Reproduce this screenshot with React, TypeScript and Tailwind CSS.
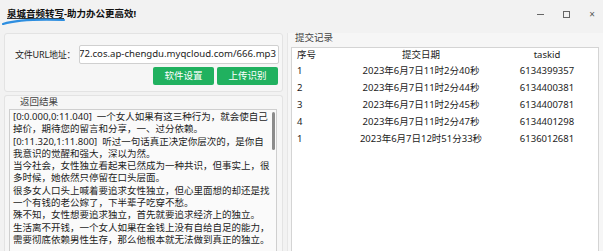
const rows = [
  { no: "1", date: "2023年6月7日11时2分40秒", id: "6134399357" },
  { no: "2", date: "2023年6月7日11时2分44秒", id: "6134400381" },
  { no: "3", date: "2023年6月7日11时2分45秒", id: "6134400781" },
  { no: "4", date: "2023年6月7日11时2分47秒", id: "6134401298" },
  { no: "1", date: "2023年6月7日12时51分33秒", id: "6136012681" },
];

const lines = [
  "[0:0.000,0:11.040]  一个女人如果有这三种行为，就会使自己",
  "掉价，期待您的留言和分享，一、过分依赖。",
  "[0:11.320,1:11.800]  听过一句话真正决定你层次的，是你自",
  "我意识的觉醒和强大，深以为然。",
  "当今社会，女性独立看起来已然成为一种共识，但事实上，很",
  "多时候，她依然只停留在口头层面。",
  "很多女人口头上喊着要追求女性独立，但心里面想的却还是找",
  "一个有钱的老公嫁了，下半辈子吃穿不愁。",
  "殊不知，女性想要追求独立，首先就要追求经济上的独立。",
  "生活离不开钱，一个女人如果在金钱上没有自给自足的能力，",
  "需要彻底依赖男性生存，那么他根本就无法做到真正的独立。",
];

export default function App() {
  return (
    <div className="flex h-[251px] w-[603px] flex-col overflow-hidden bg-[#f2f2f2] font-['Noto_Sans','Noto_Sans_CJK_SC',sans-serif] text-[9.5px] text-[#1c1c1c]">
      {/* title bar */}
      <div className="flex h-[26px] shrink-0 items-center justify-between pl-[7px] pr-[8px] pt-[2px]">
        <div className="relative font-bold leading-[10px] text-[#111]">
          <span className="underline decoration-[#333] underline-offset-[1px]">泉城音频转写</span>
          -助力办公更高效!
          <svg className="absolute left-[-5px] top-[8px]" width="64" height="8" viewBox="0 0 64 8">
            <path d="M1 7 C 14 3, 34 2, 62 3" stroke="#2d8ee0" strokeWidth="2.2" fill="none" strokeLinecap="round" />
          </svg>
        </div>
        <div className="flex items-center gap-[19px] text-[#5a5a5a]">
          <span className="h-px w-[7px] bg-[#666]" />
          <span className="h-[7px] w-[7px] border border-[#666]" />
          <span className="text-[10px] leading-none">×</span>
        </div>
      </div>

      {/* body */}
      <div className="flex min-h-0 flex-1 gap-[4px] pl-[4px] pt-[7px]">
        <div className="flex w-[279px] shrink-0 flex-col gap-[3px]">
          <div className="flex h-[59px] shrink-0 flex-col rounded-[3px] border border-[#e3e3e3] bg-[#f6f6f6] pl-[10px] pr-[3px] pt-[11px]">
            <div className="flex items-center">
              <span className="w-[64px] whitespace-nowrap text-[9px] tracking-[-0.2px]">文件URL地址：</span>
              <div className="flex h-[19px] w-[200px] items-center justify-end overflow-hidden rounded-[2px] border border-[#d0d0d0] bg-white pr-[2px] text-[9.6px] whitespace-nowrap">
                72.cos.ap-chengdu.myqcloud.com/666.mp3
              </div>
            </div>
            <div className="mt-[3px] flex justify-end gap-[3px] pr-[1px]">
              <button className="h-[18px] w-[61px] rounded-[2px] bg-[#20b15f] text-white">软件设置</button>
              <button className="h-[18px] w-[61px] rounded-[2px] bg-[#20b15f] text-white">上传识别</button>
            </div>
          </div>

          <div className="flex min-h-0 flex-1 flex-col rounded-t-[3px] border border-b-0 border-[#e3e3e3] bg-[#f6f6f6] pl-[4px] pt-[1px]">
            <div className="pl-[11px] leading-[10px] text-[#444]">返回结果</div>
            <div className="relative mt-[2px] w-[268px] flex-1 overflow-hidden border border-b-0 border-[#cfcfcf] bg-[#fafafa] pl-[3px] pt-[1px]">
              {lines.map((l, i) => (
                <div key={i} className="whitespace-pre leading-[12.3px]">
                  {l}
                </div>
              ))}
              <div className="absolute right-[1px] top-[2px] h-[38px] w-[3px] rounded-full bg-[#8c8c8c]" />
            </div>
          </div>
        </div>

        <div className="flex min-w-0 flex-1 flex-col border-l border-[#e6e6e6] bg-[#f6f6f6] pl-[3px] pr-[4px]">
          <div className="pl-[4px] leading-[10px] text-[#444]">提交记录</div>
          <div className="mt-[4px] flex-1 overflow-hidden border border-b-0 border-[#d4d4d4] bg-white">
            <div className="grid h-[15px] grid-cols-[66px_126px_126px] items-center">
              <span className="pl-[5px]">序号</span>
              <span className="text-center">提交日期</span>
              <span className="text-center">taskid</span>
            </div>
            {rows.map((r, i) => (
              <div key={i} className="grid h-[17px] grid-cols-[66px_126px_126px] items-center">
                <span className="pl-[5px]">{r.no}</span>
                <span className="text-center">{r.date}</span>
                <span className="text-center">{r.id}</span>
              </div>
            ))}
          </div>
        </div>
      </div>
    </div>
  );
}
